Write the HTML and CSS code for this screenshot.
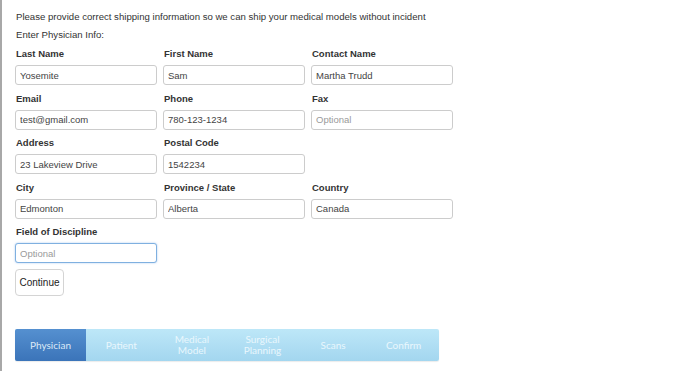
FILE: index.html
```html
<!DOCTYPE html>
<html>
<head>
	<title>Shipping information</title>
	<link rel="stylesheet" href="styles.css">
</head>
<body>
	<div class="pagina">
		<p class="intro">Please provide correct shipping information so we can ship your medical models without incident</p>
		<p class="intro ultimo">Enter Physician Info:</p>

		<form class="formulario">
			<div class="campo">
				<label>Last Name</label>
				<input type="text" value="Yosemite">
			</div>
			<div class="campo">
				<label>First Name</label>
				<input type="text" value="Sam">
			</div>
			<div class="campo">
				<label>Contact Name</label>
				<input type="text" value="Martha Trudd">
			</div>

			<div class="campo">
				<label>Email</label>
				<input type="text" value="test@gmail.com">
			</div>
			<div class="campo">
				<label>Phone</label>
				<input type="text" value="780-123-1234">
			</div>
			<div class="campo">
				<label>Fax</label>
				<input type="text" placeholder="Optional">
			</div>

			<div class="campo">
				<label>Address</label>
				<input type="text" value="23 Lakeview Drive">
			</div>
			<div class="campo">
				<label>Postal Code</label>
				<input type="text" value="1542234">
			</div>
			<div class="campo vacio"></div>

			<div class="campo">
				<label>City</label>
				<input type="text" value="Edmonton">
			</div>
			<div class="campo">
				<label>Province / State</label>
				<input type="text" value="Alberta">
			</div>
			<div class="campo">
				<label>Country</label>
				<input type="text" value="Canada">
			</div>

			<div class="campo">
				<label>Field of Discipline</label>
				<input type="text" placeholder="Optional" class="activo">
			</div>
		</form>

		<input type="button" value="Continue" class="boton">

		<div class="pasos">
			<div class="paso actual">Physician</div>
			<div class="paso">Patient</div>
			<div class="paso">Medical<br>Model</div>
			<div class="paso">Surgical<br>Planning</div>
			<div class="paso">Scans</div>
			<div class="paso">Confirm</div>
		</div>
	</div>
</body>
</html>
```

FILE: styles.css
```css
body
{
	margin: 0;
	background-color: white;
	font-family: "Liberation Sans", Arial, sans-serif;
	color: #333;
}
.pagina
{
	min-height: 100vh;
	box-sizing: border-box;
	border-left: 2px solid #a8a8a8;
	padding: 10px 0 0 13px;
}
.intro
{
	margin: 0 0 4px 1px;
	font-size: 9.6px;
	line-height: 14px;
}
.intro.ultimo
{
	margin-bottom: 4px;
}
.formulario
{
	display: grid;
	grid-template-columns: 142px 142px 142px;
	column-gap: 6px;
	row-gap: 5.5px;
}
.campo
{
	display: flex;
	flex-direction: column;
	gap: 4px;
}
.campo label
{
	font-size: 9.5px;
	font-weight: bold;
	line-height: 15px;
	padding-left: 1px;
}
input[type='text']
{
	height: 20px;
	box-sizing: border-box;
	border: 1px solid #ccc;
	border-radius: 3px;
	padding: 0 4px;
	font-family: "Liberation Sans", Arial, sans-serif;
	font-size: 9.5px;
	color: #444;
	outline: none;
}
input[type='text']::placeholder
{
	color: #9a9a9a;
}
.activo
{
	border-color: #7fb0e0 !important;
	box-shadow: 0 0 2px rgba(102, 160, 230, 0.6);
}
.boton
{
	display: block;
	margin-top: 6px;
	width: 49px;
	height: 27px;
	background-color: white;
	border: 1px solid #d4d4d4;
	border-radius: 4px;
	font-family: "Liberation Sans", Arial, sans-serif;
	font-size: 10px;
	color: #222;
	padding: 0;
}
.pasos
{
	display: flex;
	width: 424px;
	height: 32px;
	margin-top: 33px;
	border-radius: 2px;
	overflow: hidden;
	background: linear-gradient(#bde7f8, #a3d6ef);
	box-shadow: 0 1px 1px rgba(0, 0, 0, 0.08);
}
.paso
{
	flex: 1;
	display: flex;
	align-items: center;
	justify-content: center;
	text-align: center;
	font-family: Lato, "Open Sans", sans-serif;
	font-size: 10px;
	line-height: 11px;
	color: #e9f7fd;
}
.paso.actual
{
	flex: 0 0 71px;
	background: linear-gradient(#5590d0, #3b74b9);
	color: #dce9f7;
}
```
